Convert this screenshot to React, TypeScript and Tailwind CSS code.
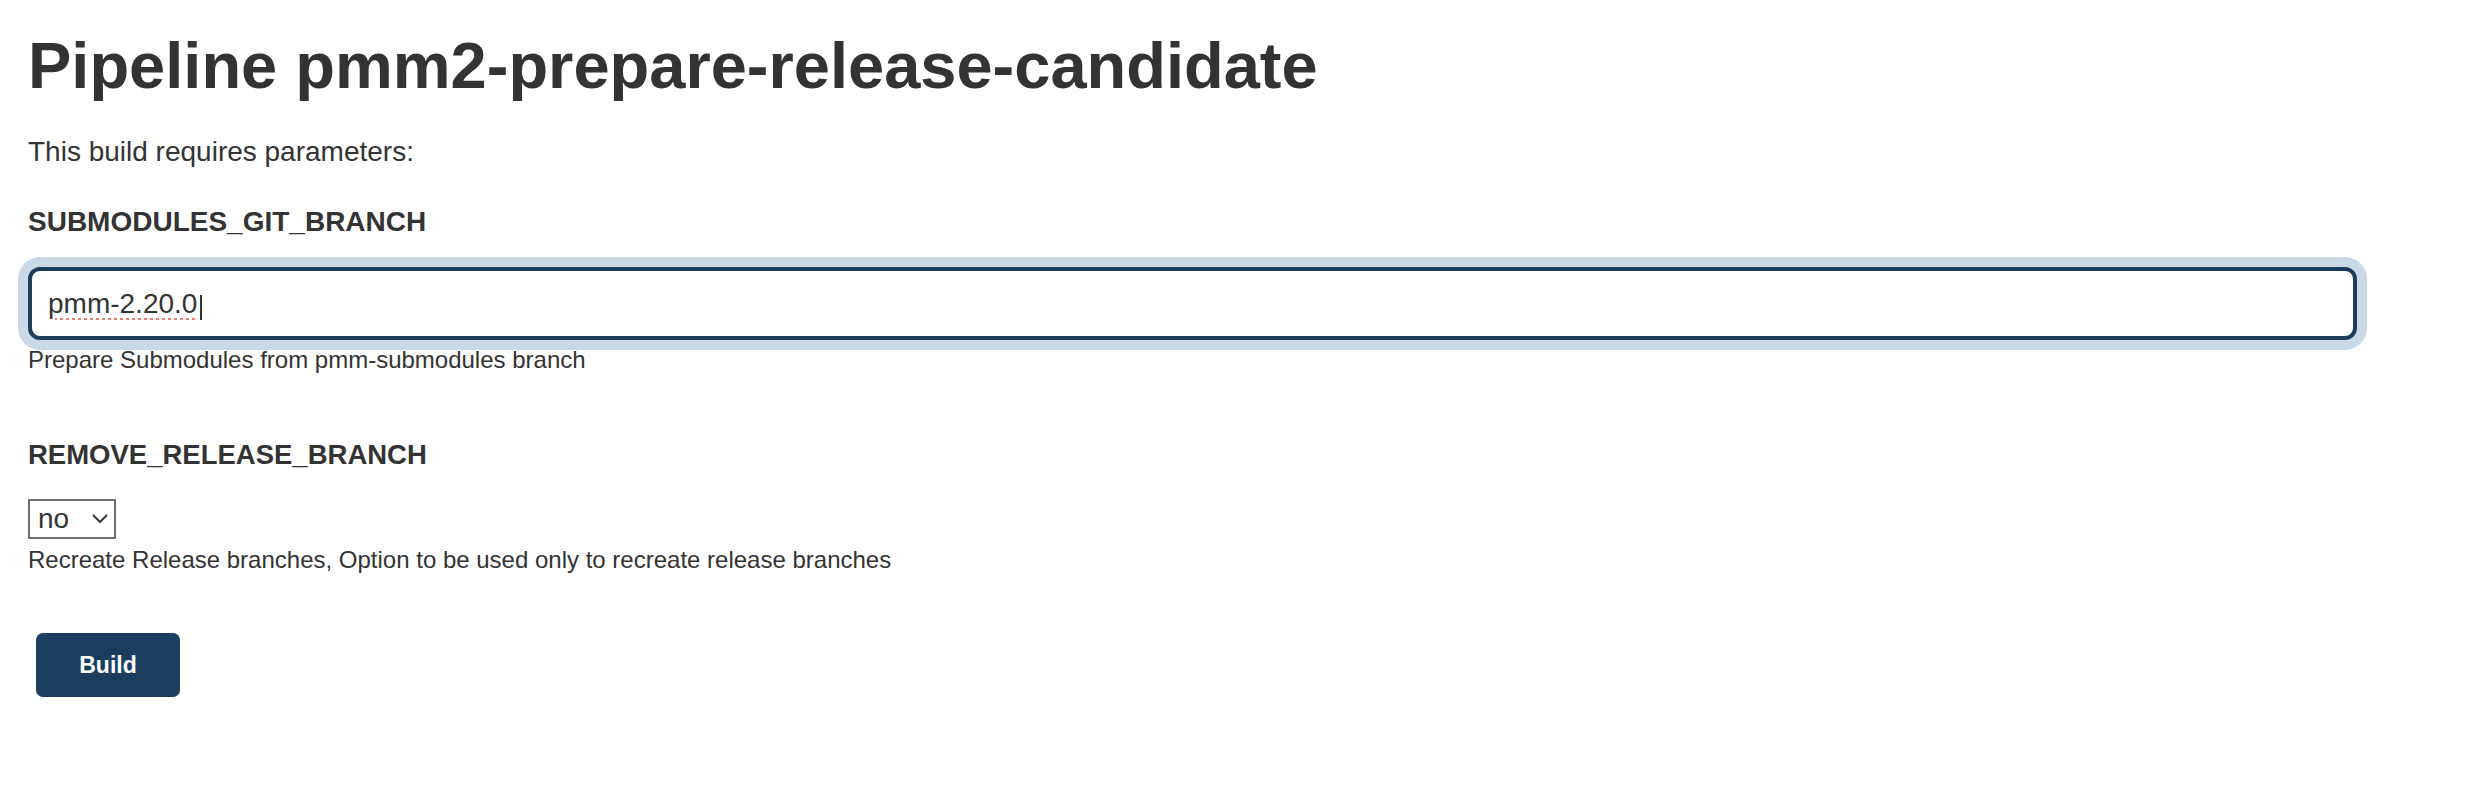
const PARAMS = [
  {
    name: "SUBMODULES_GIT_BRANCH",
    kind: "text",
    value: "pmm-2.20.0",
    description: "Prepare Submodules from pmm-submodules branch",
  },
  {
    name: "REMOVE_RELEASE_BRANCH",
    kind: "choice",
    value: "no",
    options: ["no", "yes"],
    description: "Recreate Release branches, Option to be used only to recreate release branches",
  },
];

function Chevron() {
  return (
    <svg width="16" height="10" viewBox="0 0 16 10" fill="none" className="pointer-events-none absolute right-[8px] top-[15px]">
      <path d="M1.5 1.5 L8 8 L14.5 1.5" stroke="#333" strokeWidth="1.8" strokeLinecap="round" strokeLinejoin="round" />
    </svg>
  );
}

export default function App() {
  const branch = PARAMS[0].value;

  return (
    <main className="min-h-[798px] w-full bg-white pl-[28px] pt-[30px] font-['Liberation_Sans',Arial,sans-serif] text-[#333]">
      <h1 className="text-[65px] font-bold leading-[72px]">Pipeline pmm2-prepare-release-candidate</h1>
      <p className="mt-[32px] text-[28px] leading-[36px]">This build requires parameters:</p>

      {/* text parameter, shown focused */}
      <section className="mt-[34px]">
        <h2 className="text-[28px] font-bold leading-[36px]">{PARAMS[0].name}</h2>
        <div className="relative mt-[27px] w-[2329px]">
          <input
            type="text"
            readOnly
            value={branch}
            className="h-[73px] w-full rounded-[12px] border-4 border-[#1b3e5f] bg-white px-[16px] text-[28px] text-[#333] underline decoration-[#ef7b6e] decoration-dotted decoration-[length:3px] underline-offset-[5px] shadow-[0_0_0_10px_#cbd9e6] caret-transparent outline-none"
          />
          <span className="absolute left-[172px] top-[28px] h-[25px] w-[2px] bg-[#333]" />
        </div>
        <p className="mt-[4px] text-[24px] leading-[32px]">{PARAMS[0].description}</p>
      </section>

      {/* choice parameter */}
      <section className="mt-[61px]">
        <h2 className="text-[27.5px] font-bold leading-[36px]">{PARAMS[1].name}</h2>
        <div className="relative mt-[26px] w-[88px]">
          <select
            defaultValue={PARAMS[1].value}
            className="h-[40px] w-full appearance-none rounded-none border-2 border-[#6f6f6f] bg-white pl-[8px] text-[28px] leading-[36px] text-[#333] outline-none"
          >
            {PARAMS[1].options.map((o) => (
              <option key={o} value={o}>
                {o}
              </option>
            ))}
          </select>
          <Chevron />
        </div>
        <p className="mt-[5px] text-[24px] leading-[32px]">{PARAMS[1].description}</p>
      </section>

      <button
        type="button"
        className="ml-[8px] mt-[57px] h-[64px] w-[144px] rounded-[7px] bg-[#1b3e5f] text-[23px] font-bold text-white"
      >
        Build
      </button>
    </main>
  );
}
